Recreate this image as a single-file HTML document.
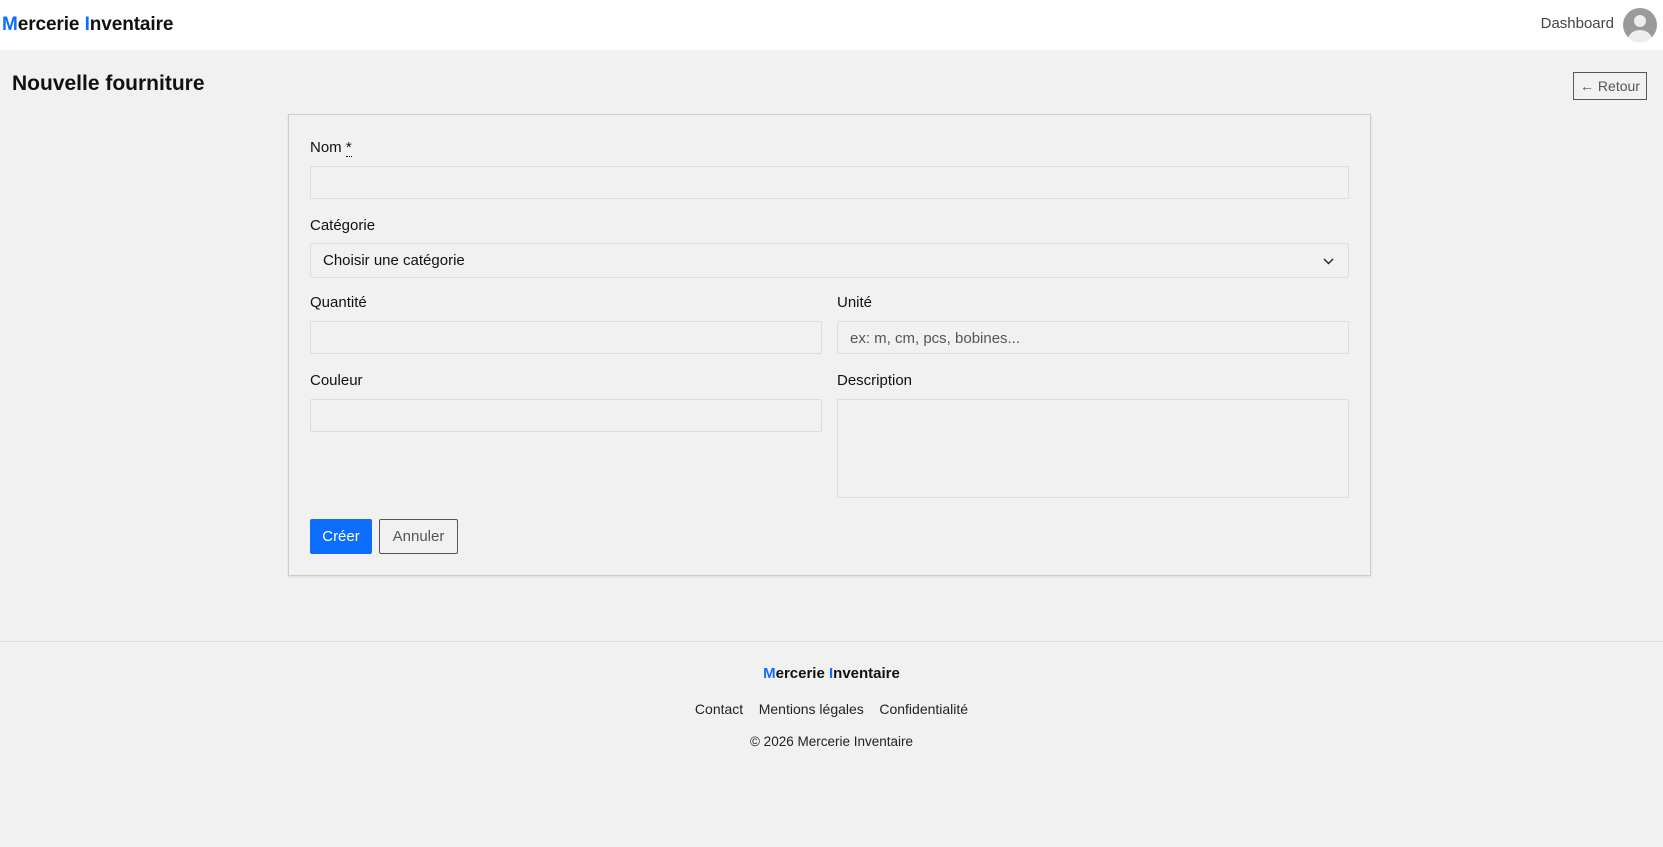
<!DOCTYPE html>
<html><head><meta charset="utf-8"><style>
*{box-sizing:border-box;margin:0;padding:0}
body{width:1663px;height:847px;background:#f1f1f1;font-family:"Liberation Sans",sans-serif;color:#111;position:relative;overflow:hidden}
.hdr{position:absolute;left:0;top:0;width:1663px;height:50px;background:#fff}
.logo{position:absolute;left:2px;top:14px;font-size:19px;font-weight:bold;letter-spacing:-0.1px}
.logo b{color:#0d6efd}
.dash{position:absolute;right:49px;top:15px;font-size:15px;color:#444}
.av{position:absolute;left:1623px;top:8px;width:34px;height:34px;border-radius:50%;background:#9a9a9a;overflow:hidden}
.av:before{content:"";position:absolute;left:11px;top:7px;width:12px;height:12px;border-radius:50%;background:#eee}
.av:after{content:"";position:absolute;left:5px;top:22px;width:24px;height:20px;border-radius:50%;background:#eee}
h1{position:absolute;left:12px;top:72px;font-size:21px;font-weight:bold}
.ret{position:absolute;left:1573px;top:72px;width:74px;height:28px;border:1px solid #555;font-size:14px;color:#555;text-align:center;line-height:26px}
.card{position:absolute;left:288px;top:114px;width:1083px;height:462px;border:1px solid #ccc;box-shadow:0 1px 2px rgba(0,0,0,.1);background:#f1f1f1}
.l{position:absolute;font-size:15px;color:#111}
.i{position:absolute;border:1px solid #ddd;background:#f1f1f1;border-radius:2px;height:33px;font-size:15px;padding:8px 12px;color:#111}
.btn{position:absolute;top:519px;height:35px;font-size:15px;text-align:center;line-height:36px}
.f{position:absolute;left:0;width:1663px;text-align:center}
</style></head><body>
<div class="hdr"><div class="logo"><b>M</b>ercerie <b>I</b>nventaire</div><div class="dash">Dashboard</div><div class="av"></div></div>
<h1>Nouvelle fourniture</h1>
<div class="ret">← Retour</div>
<div class="card"></div>
<div class="l" style="left:310px;top:139px">Nom <span style="border-bottom:1px dotted #111">*</span></div>
<div class="i" style="left:310px;top:166px;width:1039px"></div>
<div class="l" style="left:310px;top:217px">Catégorie</div>
<div class="i" style="left:310px;top:243px;width:1039px;height:35px">Choisir une catégorie<svg style="position:absolute;right:14px;top:14px" width="11" height="7" viewBox="0 0 11 7"><path d="M1 1l4.5 4.5L10 1" fill="none" stroke="#222" stroke-width="1.4"/></svg></div>
<div class="l" style="left:310px;top:294px">Quantité</div>
<div class="i" style="left:310px;top:321px;width:512px"></div>
<div class="l" style="left:837px;top:294px">Unité</div>
<div class="i" style="left:837px;top:321px;width:512px;color:#555">ex: m, cm, pcs, bobines...</div>
<div class="l" style="left:310px;top:372px">Couleur</div>
<div class="i" style="left:310px;top:399px;width:512px"></div>
<div class="l" style="left:837px;top:372px">Description</div>
<div class="i" style="left:837px;top:399px;width:512px;height:99px"></div>
<div class="btn" style="left:310px;width:62px;background:#0d6efd;color:#fff;border-radius:2px">Créer</div>
<div class="btn" style="left:379px;width:79px;border:1px solid #555;color:#555;border-radius:2px;line-height:34px">Annuler</div>
<div style="position:absolute;left:0;top:641px;width:1663px;border-top:1px solid #ddd"></div>
<div class="f" style="top:665px;font-size:15px;font-weight:bold;color:#111"><span style="color:#0d6efd">M</span>ercerie <span style="color:#0d6efd">I</span>nventaire</div>
<div class="f" style="top:701px;font-size:14px;color:#222">Contact &nbsp;&nbsp; Mentions légales &nbsp;&nbsp; Confidentialité</div>
<div class="f" style="top:734px;font-size:13.5px;color:#222">© 2026 Mercerie Inventaire</div>
</body></html>
